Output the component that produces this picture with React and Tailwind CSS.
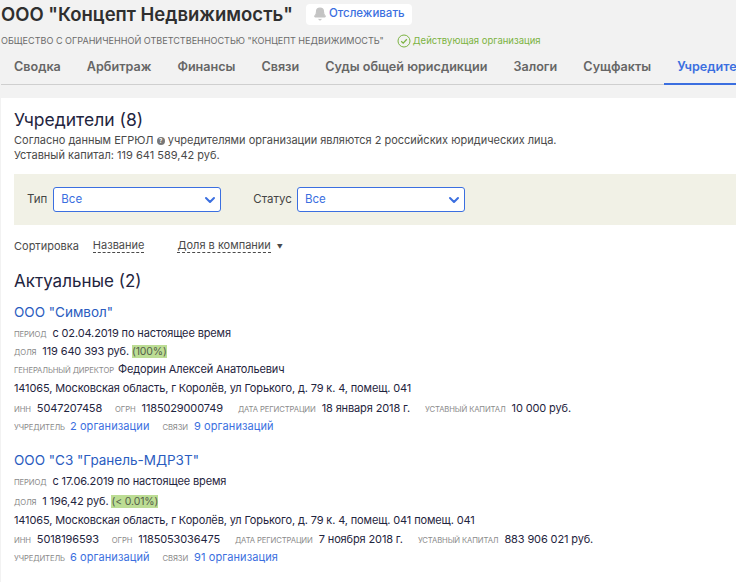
import { ChevronDown, Bell } from "lucide-react";

const tabs = ["Сводка", "Арбитраж", "Финансы", "Связи", "Суды общей юрисдикции", "Залоги", "Сущфакты"];

function Label({ children, className = "" }) {
  return <span className={`text-[7.7px] uppercase text-[#8a8a8a] ${className}`}>{children}</span>;
}

function Row({ children, className = "" }) {
  return <div className={`flex items-baseline whitespace-nowrap h-[18px] leading-[18px] text-[11px] tracking-[-0.13px] text-[#1f2540] ${className}`}>{children}</div>;
}

function Select({ width }) {
  return (
    <div className={`${width} h-[25px] flex items-center justify-between bg-white border border-[#3b6fe0] rounded-[3px] pl-[7px] pr-[2px] text-[11.5px] text-[#3b6fe0]`}>
      <span>Все</span>
      <ChevronDown className="w-[16px] h-[16px]" strokeWidth={3} />
    </div>
  );
}

function Share({ children }) {
  return <span className="ml-[3px] bg-[#bcdd94] text-[#55604a] text-[10.5px] leading-[13px]">{children}</span>;
}

function Link({ children }) {
  return <span className="text-[#3b6fe0] tracking-[0.1px]">{children}</span>;
}

export default function App() {
  return (
    <div className="w-[736px] h-[582px] overflow-hidden bg-[#f2f2f2] font-['Inter','Noto_Sans',sans-serif]">
      <div className="flex items-center h-[28px] pl-[1px]">
        <h1 className="text-[18.5px] leading-[28px] font-semibold text-[#2f2f2f] whitespace-nowrap">ООО "Концепт Недвижимость"</h1>
        <div className="ml-[13px] flex items-center gap-[2px] h-[21px] pl-[7px] pr-[7px] bg-white rounded-[4px] text-[11.5px] font-medium text-[#3b6fe0] whitespace-nowrap">
          <Bell className="w-[14px] h-[14px] text-[#c4c4c4] fill-[#c4c4c4]" />
          Отслеживать
        </div>
      </div>
      <div className="flex items-center h-[26px] pl-[1px] whitespace-nowrap">
        <span className="text-[9.07px] text-[#6b6b6b]">ОБЩЕСТВО С ОГРАНИЧЕННОЙ ОТВЕТСТВЕННОСТЬЮ "КОНЦЕПТ НЕДВИЖИМОСТЬ"</span>
        <svg className="ml-[13px] w-[14px] h-[14px]" viewBox="0 0 14 14" fill="none" stroke="#7cb342" strokeWidth="1">
          <circle cx="7" cy="7" r="6" />
          <path d="M4.2 7.2 L6.2 9.1 L9.8 5.2" strokeWidth="1.3" />
        </svg>
        <span className="ml-[2px] text-[9.5px] text-[#7cb342]">Действующая организация</span>
      </div>
      <div className="flex h-[31px] mx-[1px] border-b border-[#cfcfcf] whitespace-nowrap text-[12.6px] font-semibold text-[#666]">
        {tabs.map((t) => (
          <div key={t} className="px-[13px] pt-[4px]">{t}</div>
        ))}
        <div className="px-[13px] pt-[4px] h-[31px] text-[#3b6fe0] border-b-[2px] border-[#3b6fe0]">Учредители</div>
      </div>
      <div className="mt-[13px] ml-[1px] h-[500px] bg-white pl-[13px] pt-[10px]">
        <h2 className="text-[17.5px] leading-[24px] text-[#1f2540]">Учредители (8)</h2>
        <p className="text-[11px] leading-[15px] mt-[1px] text-[#4a4a4a] whitespace-nowrap">
          Согласно данным ЕГРЮЛ <span className="inline-flex items-center justify-center w-[8px] h-[8px] rounded-full bg-[#777] text-white text-[6px] leading-[8px] align-[1px] font-bold">?</span> учредителями организации являются 2 российских юридических лица.
        </p>
        <p className="text-[11px] leading-[15px] text-[#4a4a4a] whitespace-nowrap">Уставный капитал: 119 641 589,42 руб.</p>
        <div className="mt-[11px] h-[51px] bg-[#f1f1e6] flex items-center pl-[13px] text-[11.5px] text-[#444]">
          <span className="mr-[6px]">Тип</span>
          <Select width="w-[168px]" />
          <span className="ml-[32px] mr-[5px]">Статус</span>
          <Select width="w-[168px]" />
        </div>
        <div className="mt-[13px] flex items-center h-[16px] text-[11px] text-[#4a4a4a] whitespace-nowrap">
          <span>Сортировка</span>
          <span className="ml-[14px] border-b border-dashed border-[#4a4a4a] leading-[13px]">Название</span>
          <span className="ml-[33px] border-b border-dashed border-[#4a4a4a] leading-[13px]">Доля в компании</span>
          <span className="ml-[6px] text-[6px]">▼</span>
        </div>
        <h2 className="mt-[15px] text-[17px] leading-[24px] text-[#1f2540]">Актуальные (2)</h2>

        <div className="mt-[9px] text-[13.5px] leading-[20px] text-[#2a5cc0]">ООО "Символ"</div>
        <Row className="mt-[2px]"><Label className="mr-[6px]">период</Label>с 02.04.2019 по настоящее время</Row>
        <Row><Label className="mr-[6px]">доля</Label>119 640 393 руб. <Share>(100%)</Share></Row>
        <Row><Label className="mr-[4px]">генеральный директор</Label>Федорин Алексей Анатольевич</Row>
        <Row className="mt-[1px]">141065, Московская область, г Королёв, ул Горького, д. 79 к. 4, помещ. 041</Row>
        <Row className="mt-[2px]"><Label className="mr-[6px]">инн</Label>5047207458<Label className="ml-[13px] mr-[6px]">огрн</Label>1185029000749<Label className="ml-[15px] mr-[6px]">дата регистрации</Label>18 января 2018 г.<Label className="ml-[15px] mr-[6px]">уставный капитал</Label>10 000 руб.</Row>
        <Row><Label className="mr-[5px]">учредитель</Label><Link>2 организации</Link><Label className="ml-[13px] mr-[6px]">связи</Label><Link>9 организаций</Link></Row>

        <div className="mt-[15px] text-[13.5px] leading-[20px] text-[#2a5cc0]">ООО "СЗ "Гранель-МДРЗТ"</div>
        <Row className="mt-[2px]"><Label className="mr-[6px]">период</Label>с 17.06.2019 по настоящее время</Row>
        <Row className="mt-[2px]"><Label className="mr-[6px]">доля</Label>1 196,42 руб. <Share>(&lt; 0.01%)</Share></Row>
        <Row className="mt-[1px]">141065, Московская область, г Королёв, ул Горького, д. 79 к. 4, помещ. 041 помещ. 041</Row>
        <Row className="mt-[1px]"><Label className="mr-[6px]">инн</Label>5018196593<Label className="ml-[13px] mr-[6px]">огрн</Label>1185053036475<Label className="ml-[15px] mr-[6px]">дата регистрации</Label>7 ноября 2018 г.<Label className="ml-[15px] mr-[6px]">уставный капитал</Label>883 906 021 руб.</Row>
        <Row><Label className="mr-[5px]">учредитель</Label><Link>6 организаций</Link><Label className="ml-[13px] mr-[6px]">связи</Label><Link>91 организация</Link></Row>
      </div>
    </div>
  );
}
